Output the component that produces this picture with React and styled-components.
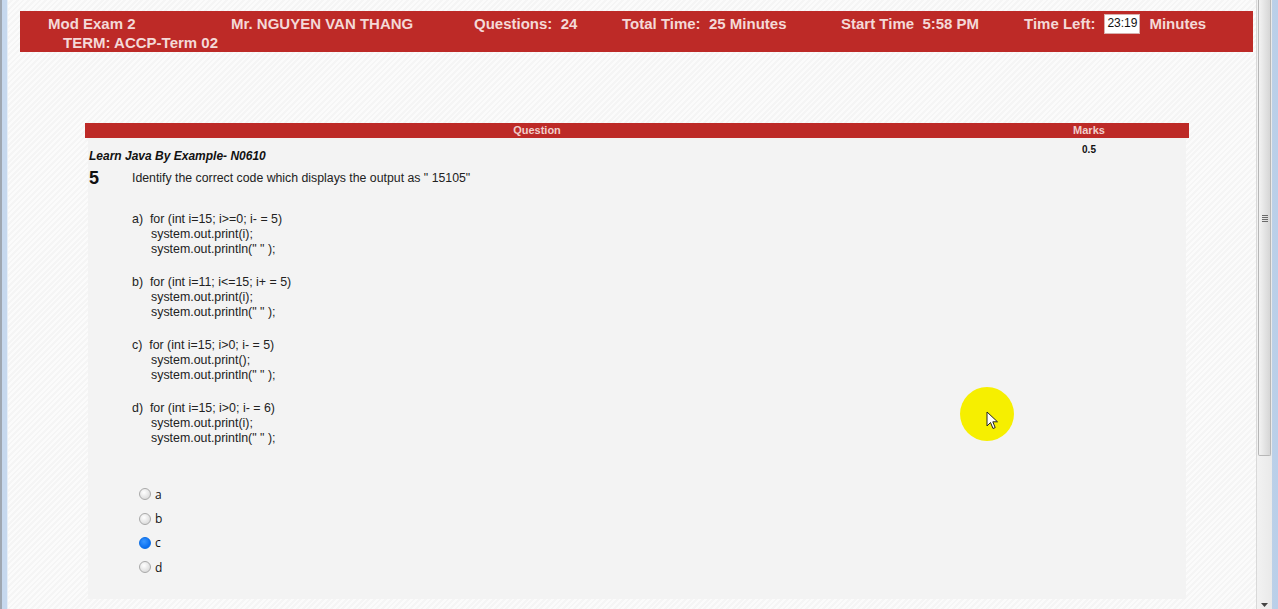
import React from "react";
import styled, { createGlobalStyle } from "styled-components";

const Global = createGlobalStyle`
  html, body { margin: 0; padding: 0; }
  body {
    width: 1278px; height: 609px; overflow: hidden;
    font-family: "Liberation Sans", Arial, sans-serif;
    background: #f7f7f7;
  }
`;

const Window = styled.div`
  display: flex;
  width: 1278px;
  height: 609px;
`;

const FrameLeft = styled.div`
  width: 8px;
  flex: none;
  background: linear-gradient(90deg, #9fa7b1 0 2px, #c6d8ee 2px 7px, #e6eef7 7px 8px);
`;

const FrameRight = styled.div`
  width: 6px;
  flex: none;
  background: linear-gradient(90deg, #bcd0e8, #b9cfea);
`;

const Page = styled.div`
  flex: 1;
  position: relative;
  background: repeating-linear-gradient(135deg, #fbfbfb 0 2px, #f5f5f5 2px 4px);
  border-right: 1px solid #d9d9d9;
`;

const Header = styled.div`
  margin: 11px 3px 0 12px;
  height: 41px;
  box-sizing: border-box;
  padding: 3px 0 0 28px;
  background: #bd2a27;
  color: #f4d9d7;
  font-weight: bold;
  font-size: 15px;
  line-height: 19px;
  display: grid;
  grid-template-columns: 183px 243px 148px 219px 183px 1fr;
  grid-template-rows: 19px 19px;
  white-space: pre;
`;

const HeadItem = styled.div`
  display: flex;
  align-items: center;
  padding-left: ${(p) => p.$indent || 0}px;
  grid-column: ${(p) => p.$span || "auto"};
`;

const TimeBox = styled.span`
  display: inline-flex;
  align-items: center;
  justify-content: center;
  width: 36px;
  height: 20px;
  margin: 0 9px 0 9px;
  background: #fff;
  color: #111;
  font-size: 12px;
  font-weight: normal;
  border: 1px solid #d8b0ae;
  box-sizing: border-box;
`;

const Panel = styled.div`
  margin: 71px 0 0 77px;
  width: 1104px;
`;

const Bar = styled.div`
  display: grid;
  grid-template-columns: 904px 1fr;
  height: 15px;
  background: #bd2a27;
  color: #f1cfcc;
  font-size: 11px;
  font-weight: bold;
  line-height: 15px;
  text-align: center;
`;

const Body = styled.div`
  margin: 0 3px;
  display: grid;
  grid-template-columns: 901px 1fr;
  background: #f3f3f3;
  color: #222;
`;

const MainCell = styled.div`
  padding: 10px 0 19px 1px;
`;

const MarksCell = styled.div`
  padding: 6px 0 0 3px;
  text-align: center;
  font-size: 10px;
  font-weight: bold;
  line-height: 12px;
  color: #111;
`;

const Topic = styled.div`
  font-size: 12px;
  font-weight: bold;
  font-style: italic;
  line-height: 16px;
  color: #111;
`;

const QRow = styled.div`
  display: flex;
  align-items: center;
  margin-top: 4px;
  height: 20px;
`;

const QNum = styled.div`
  width: 43px;
  font-size: 18px;
  font-weight: bold;
  color: #111;
`;

const QText = styled.div`
  font-size: 12.3px;
  white-space: pre;
`;

const Options = styled.div`
  margin: 24px 0 0 43px;
  font-size: 12.4px;
  line-height: 15px;
  white-space: pre;
`;

const Option = styled.div`
  margin-bottom: 18px;
`;

const Indent = styled.div`
  padding-left: 19px;
`;

const Answers = styled.div`
  margin: 36px 0 0 50px;
`;

const AnswerRow = styled.label`
  display: flex;
  align-items: center;
  height: 24.4px;
  font-size: 12px;
  color: #111;
  font-family: "Open Sans", "Liberation Sans", sans-serif;
`;

const Radio = styled.span`
  width: 12px;
  height: 12px;
  box-sizing: border-box;
  border-radius: 50%;
  margin-right: 4px;
  border: 1px solid ${(p) => (p.$on ? "#0a6de6" : "#a9a9a9")};
  background: ${(p) =>
    p.$on
      ? "radial-gradient(circle at 40% 35%, #3a97ff, #0b6ff0 70%)"
      : "radial-gradient(circle at 40% 35%, #ffffff, #dcdcdc 75%)"};
`;

const Highlight = styled.div`
  position: absolute;
  left: 952px;
  top: 387px;
  width: 54px;
  height: 54px;
  border-radius: 50%;
  background: #f6ef00;
`;

const Cursor = styled.svg`
  position: absolute;
  left: 26px;
  top: 24px;
`;

const Scrollbar = styled.div`
  width: 15px;
  flex: none;
  display: flex;
  flex-direction: column;
  background: linear-gradient(90deg, #f2f2f2, #e9e9e9);
`;

const Thumb = styled.div`
  height: 455px;
  margin: 0 1px 0 1px;
  border: 1px solid #b7b7b7;
  border-top: none;
  border-radius: 0 0 2px 2px;
  background: linear-gradient(90deg, #f3f3f3, #e4e4e4 50%, #d6d6d6);
  display: flex;
  align-items: center;
  justify-content: center;
`;

const Grip = styled.div`
  width: 6px;
  height: 7px;
  background: repeating-linear-gradient(180deg, #6a6a6a 0 1px, transparent 1px 2px);
  margin-top: -18px;
`;

const Track = styled.div`
  flex: 1;
  display: flex;
  align-items: flex-end;
  justify-content: center;
  padding-bottom: 2px;
`;

const options = [
  ["a)  for (int i=15; i>=0; i- = 5)", "system.out.print(i);", 'system.out.println(" " );'],
  ["b)  for (int i=11; i<=15; i+ = 5)", "system.out.print(i);", 'system.out.println(" " );'],
  ["c)  for (int i=15; i>0; i- = 5)", "system.out.print();", 'system.out.println(" " );'],
  ["d)  for (int i=15; i>0; i- = 6)", "system.out.print(i);", 'system.out.println(" " );'],
];

export default function App() {
  return (
    <>
      <Global />
      <Window>
        <FrameLeft />
        <Page>
          <Header>
            <HeadItem>Mod Exam 2</HeadItem>
            <HeadItem>Mr. NGUYEN VAN THANG</HeadItem>
            <HeadItem>Questions:  24</HeadItem>
            <HeadItem>Total Time:  25 Minutes</HeadItem>
            <HeadItem>Start Time  5:58 PM</HeadItem>
            <HeadItem>
              Time Left:<TimeBox>23:19</TimeBox>Minutes
            </HeadItem>
            <HeadItem $indent={15} $span="1 / span 3">TERM: ACCP-Term 02</HeadItem>
          </Header>
          <Panel>
            <Bar>
              <div>Question</div>
              <div>Marks</div>
            </Bar>
            <Body>
              <MainCell>
                <Topic>Learn Java By Example- N0610</Topic>
                <QRow>
                  <QNum>5</QNum>
                  <QText>Identify the correct code which displays the output as " 15105"</QText>
                </QRow>
                <Options>
                  {options.map((o) => (
                    <Option key={o[0]}>
                      <div>{o[0]}</div>
                      <Indent>{o[1]}</Indent>
                      <Indent>{o[2]}</Indent>
                    </Option>
                  ))}
                </Options>
                <Answers>
                  {["a", "b", "c", "d"].map((l) => (
                    <AnswerRow key={l}>
                      <Radio $on={l === "c"} />
                      {l}
                    </AnswerRow>
                  ))}
                </Answers>
              </MainCell>
              <MarksCell>0.5</MarksCell>
            </Body>
          </Panel>
          <Highlight>
            <Cursor width="13" height="19" viewBox="0 0 13 19">
              <path
                d="M1 1 L1 15 L4.5 11.5 L7 17.5 L9.2 16.6 L6.8 10.8 L11.5 10.8 Z"
                fill="#fff"
                stroke="#222"
                strokeWidth="1"
                strokeLinejoin="round"
              />
            </Cursor>
          </Highlight>
        </Page>
        <Scrollbar>
          <Thumb>
            <Grip />
          </Thumb>
          <Track>
            <svg width="7" height="4" viewBox="0 0 7 4">
              <path d="M0 0 L7 0 L3.5 4 Z" fill="#444" />
            </svg>
          </Track>
        </Scrollbar>
        <FrameRight />
      </Window>
    </>
  );
}
